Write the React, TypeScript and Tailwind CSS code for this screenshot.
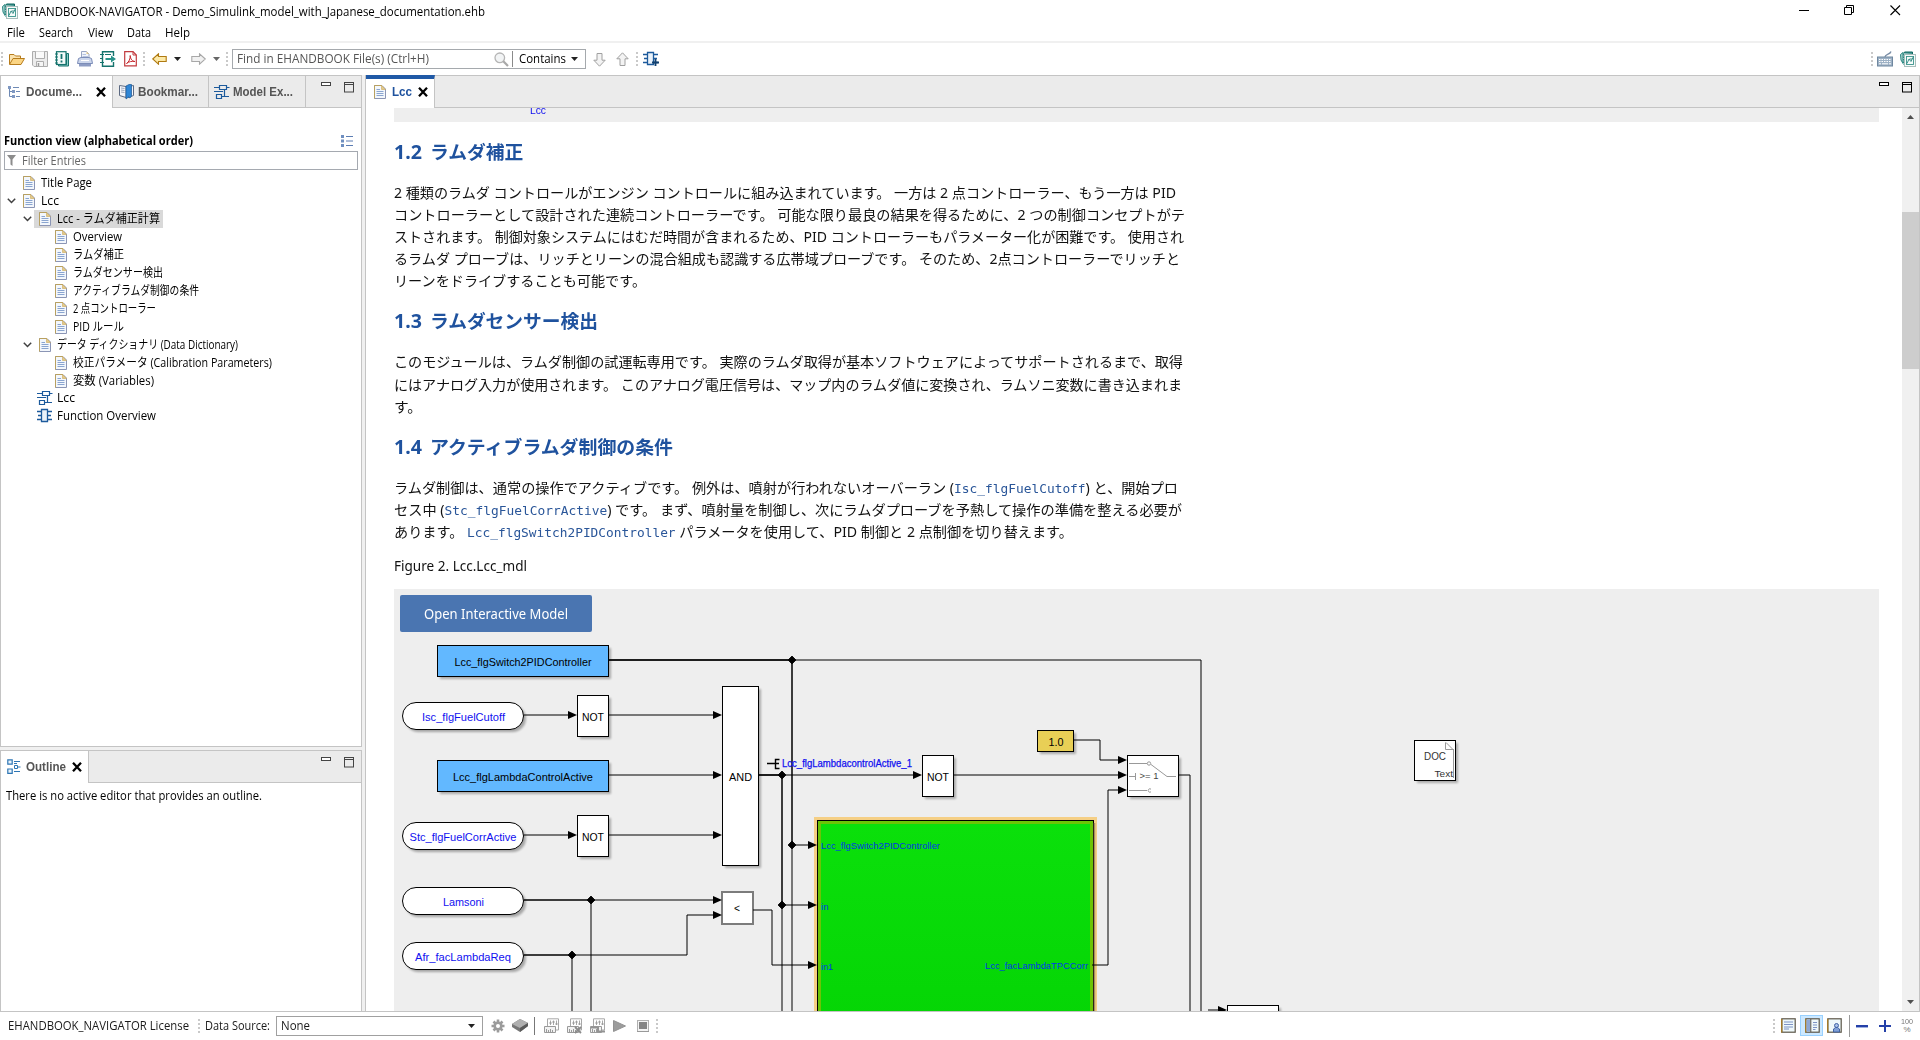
import React, { useLayoutEffect, useRef, useState } from "react";

const UI = "font-['Open_Sans','Noto_Sans_CJK_JP',sans-serif]";
const DOCF = "font-['Noto_Sans','Noto_Sans_CJK_JP',sans-serif]";

/* One line of text condensed or widened to an exact width. */
function Fit({ w, className = "", children }: { w: number; className?: string; children: React.ReactNode }) {
  const ref = useRef<HTMLSpanElement>(null);
  const [k, setK] = useState(1);
  useLayoutEffect(() => {
    if (ref.current && ref.current.offsetWidth) {
      const cs = parseFloat(getComputedStyle(ref.current).width);
      setK(w / (cs || ref.current.offsetWidth));
    }
  }, [w]);
  return (
    <span className={`block shrink-0 whitespace-pre ${className}`} style={{ width: w }}>
      <span ref={ref} className="inline-block origin-left" style={{ transform: `scaleX(${k})` }}>
        {children}
      </span>
    </span>
  );
}

type IP = { className?: string };
const Ico = ({ className = "", w = 16, h = 16, children }: IP & { w?: number; h?: number; children: React.ReactNode }) => (
  <svg className={`block shrink-0 ${className}`} width={w} height={h} viewBox={`0 0 ${w} ${h}`} fill="none">
    {children}
  </svg>
);

const Grip = ({ className = "" }: IP) => (
  <Ico w={3} h={16} className={className}>
    {[1, 5, 9, 13].map((y) => (
      <rect key={y} x="0" y={y} width="2" height="2" fill="#c9c9c9" />
    ))}
  </Ico>
);
const Tri = ({ className = "", c = "#222" }: IP & { c?: string }) => (
  <Ico w={7} h={4} className={className}>
    <path d="M0 0H7L3.5 4Z" fill={c} />
  </Ico>
);
const Logo = ({ className = "" }: IP) => (
  <Ico className={className}>
    <path d="M3.500 2.500L4.500 1H12.500V3" fill="#3d918b" stroke="#0d6660" />
    <path d="M.5 3.500L3 1.500V12.500L1 9Z" fill="#a9d2ce" stroke="#2b8780" />
    <path d="M3.500 3V13.500" stroke="#2b8780" strokeDasharray="1.500 1" />
    <rect x="4.500" y="3.500" width="11" height="12" fill="#f6fbfa" stroke="#a9bebc" />
    <rect x="6.500" y="5.500" width="7" height="8" stroke="#3a938c" strokeWidth=".9" />
    <path d="M7 12.500L9 8L11 10.500L13.500 5.500M9.500 8H12" stroke="#2b8780" strokeWidth=".9" />
  </Ico>
);
const DocIcon = ({ className = "" }: IP) => (
  <Ico w={12} h={14} className={className}>
    <path d="M.5 .5H8L11.500 4V13.500H.5Z" fill="#f3f7fc" stroke="#8b95b5" />
    <path d="M.5 13.500V.5H8" stroke="#b8a060" />
    <path d="M7.500 .5V4.500H11.500Z" fill="#e3c98a" stroke="#c9a75a" strokeWidth=".6" />
    <path d="M2.500 4.500H6M2.500 6.500H9.500M2.500 8.500H9.500M2.500 10.500H9.500" stroke="#8aa5d0" />
  </Ico>
);
const ModelIcon = ({ className = "" }: IP) => (
  <Ico className={className}>
    <path d="M5.500 1.500H12.500V5.500H5.500ZM2.500 10.500H7.500V14.500H2.500ZM0 3.500H5M13 3.500H15.500M0 7.500H8.500V8M10.500 5.500V12.500H15M8 12.500H10" stroke="#1c5a9c" strokeWidth="1.200" />
  </Ico>
);
const ChipIcon = ({ className = "", plus = false }: IP & { plus?: boolean }) => (
  <Ico className={className}>
    <path d="M4.500 1.500H10.500V13.500H4.500Z" fill="#eaf2fa" stroke="#1c5a9c" strokeWidth="1.300" />
    <path d="M0 3.500H4M1 7.500H4M0 11.500H4M11 3.500H15M11 7.500H14M11 11.500H15" stroke="#1c5a9c" strokeWidth="1.300" />
    {plus && <path d="M12.500 8V15M9 11.500H16" stroke="#12406f" strokeWidth="1.800" />}
  </Ico>
);
const XIcon = ({ className = "" }: IP) => (
  <Ico w={10} h={10} className={className}>
    <path d="M1 .8L9 9.200M9 .8L1 9.200" stroke="#000" strokeWidth="2.300" />
  </Ico>
);
const MinMax = ({ c = "#444", className = "" }: IP & { c?: string }) => (
  <Ico w={34} h={11} className={className}>
    <rect x=".5" y=".5" width="9" height="3" fill="#fff" stroke={c} />
    <rect x="23.500" y=".5" width="9" height="9.500" stroke={c} />
    <path d="M23 2.500H33" stroke={c} />
  </Ico>
);
const Chevron = ({ className = "" }: IP) => (
  <Ico w={9} h={6} className={className}>
    <path d="M.8 .8L4.500 4.500L8.200 .8" stroke="#404040" strokeWidth="1.500" />
  </Ico>
);

const OpenIcon = ({ className = "" }: IP) => (
  <Ico className={className}>
    <path d="M.5 13V3.500H5L6.500 5H11.500V7" fill="#fbe3ae" stroke="#b77c1c" />
    <path d="M.5 13.500L4 7.500H15.500L12 13.500Z" fill="#fbd584" stroke="#b77c1c" />
  </Ico>
);
const SaveIcon = ({ className = "" }: IP) => (
  <Ico className={className}>
    <path d="M.5 .5H15.500V15.500H2L.5 14Z" fill="#ececec" stroke="#adadad" />
    <path d="M3.500 .5V7.500H12.500V.5" fill="#fafafa" stroke="#adadad" />
    <path d="M4.500 15V10.500H11.500V15" fill="#f6f6f6" stroke="#adadad" />
    <path d="M6.500 12V15" stroke="#999" strokeWidth="1.500" />
  </Ico>
);
const BookIcon = ({ className = "" }: IP) => (
  <Ico className={className}>
    <path d="M12.500 2.500H14.500V15H4.500V13.500H12.500Z" fill="#8accc6" stroke="#15736d" />
    <rect x="2.500" y=".7" width="9.500" height="12.800" fill="#f4fbfa" stroke="#15736d" strokeWidth="1.200" />
    <path d="M1 3H4M1 6H4M1 9H4M1 12H4" stroke="#15736d" />
    <path d="M7.500 3V8M7.500 9.500V11.500" stroke="#15736d" strokeWidth="1.800" />
  </Ico>
);
const PrintIcon = ({ className = "" }: IP) => (
  <Ico className={className}>
    <path d="M4.500 8V.5H9.500L12 3V8" fill="#f2f5fb" stroke="#98a5c4" />
    <path d="M9.500 .5V3H12Z" fill="#e3c98a" />
    <path d="M5.500 3.500H9M5.500 5.500H11" stroke="#b5c2de" />
    <path d="M1.500 7.500L4 6.500H12L14.500 7.500L15.500 12.500H.5Z" fill="#cdd7ec" stroke="#7c8db8" />
    <path d="M2 13H14V15.500H2Z" fill="#8d9cc4" />
    <path d="M4 9.500H12" stroke="#fff" />
  </Ico>
);
const ExportIcon = ({ className = "" }: IP) => (
  <Ico className={className}>
    <path d="M13.500 5V.8H2.500V15.200H13.500V11" stroke="#15736d" strokeWidth="1.400" />
    <path d="M0 3.500H4M0 7.500H3M0 11.500H4M5 3.500H11" stroke="#15736d" />
    <path d="M5.500 7H11V4.500L16 8L11 11.500V9H5.500Z" fill="#2a938b" />
  </Ico>
);
const PdfIcon = ({ className = "" }: IP) => (
  <Ico w={13} h={16} className={className}>
    <path d="M.7 .7H9L12.300 4V14.800H.7Z" fill="#fff" stroke="#c23b3f" strokeWidth="1.200" />
    <path d="M9 .7V4H12.300" stroke="#c23b3f" />
    <path d="M2.500 12.500C5 11 6.500 7.500 6.200 4.500C6.500 8.500 8.500 10.300 11 10.500C8 10 5 10.500 2.500 12.500Z" stroke="#c8282d" />
  </Ico>
);
const LArrow = ({ className = "", s, f, flip }: IP & { s: string; f: string; flip?: boolean }) => (
  <Ico w={15} h={12} className={className}>
    <path d={flip ? "M14.300 6L8.500 .8V3.500H.8V8.500H8.500V11.200Z" : "M.7 6L6.500 .8V3.500H14.200V8.500H6.500V11.200Z"} fill={f} stroke={s} strokeWidth="1.100" />
  </Ico>
);
const VArrow = ({ className = "", up }: IP & { up?: boolean }) => (
  <Ico w={13} h={15} className={className}>
    <path d={up ? "M6.500 .8L12.200 6.800H9V13.500H4V6.800H.8Z" : "M6.500 14.200L12.200 8.200H9V1.500H4V8.200H.8Z"} fill="#f3f3f3" stroke="#a0a0a0" />
  </Ico>
);
const Magnifier = ({ className = "" }: IP) => (
  <Ico w={15} h={15} className={className}>
    <circle cx="5.800" cy="5.800" r="4.800" fill="#f2f4f5" stroke="#b5b5b5" strokeWidth="1.300" />
    <path d="M9.300 9.300L14 14" stroke="#a8a8a8" strokeWidth="2.200" />
  </Ico>
);
const KeyboardIcon = ({ className = "" }: IP) => (
  <Ico className={className}>
    <path d="M8 6C8 3 13 4 14 .5" stroke="#7a8ea6" strokeWidth="1.300" />
    <rect x=".5" y="6" width="15" height="9" fill="#9db1c5" stroke="#6f879f" />
    <path d="M2 8.500H14M2 10.500H14" stroke="#fff" strokeDasharray="1.500 1" />
    <path d="M2 12.800H4M5 12.800H11M12 12.800H14" stroke="#fff" />
  </Ico>
);
const TreeIcon = ({ className = "" }: IP) => (
  <Ico w={12} h={12} className={className}>
    <path d="M1.500 2V10.500H5M1.500 5.500H5" stroke="#6f8ab5" />
    <path d="M0 0H3V3H0ZM4 4H7V7H4ZM4 9H7V12H4Z" fill="#7f98c2" />
    <path d="M5 1.500H11M8 5.500H12M8 10.500H12" stroke="#6f8ab5" />
  </Ico>
);
const BookmarkIcon = ({ className = "" }: IP) => (
  <Ico className={className}>
    <path d="M.5 1.500L7 2.500V13.500L.5 11.500Z" fill="#f5f6fa" stroke="#5d6a82" />
    <path d="M2 4L5.500 4.500M2 6L5.500 6.500M2 8L5.500 8.500" stroke="#9aa7bd" />
    <path d="M14.500 1.500L9 2.500V13.500L14.500 11.500Z" fill="#f5f6fa" stroke="#5d6a82" />
    <path d="M7 2L10 .5H12.500V12L11 14L9.500 13L7 15Z" fill="#2f86d6" stroke="#1a5797" strokeWidth=".7" />
  </Ico>
);
const OutlineIcon = ({ className = "" }: IP) => (
  <Ico w={14} h={16} className={className}>
    <path d="M.8 .8H5.200V5.200H.8ZM.8 10H5.200V14.400H.8Z" fill="#eaf3fb" stroke="#2d76b5" strokeWidth="1.200" />
    <path d="M7.500 6.500H10.500V9.500H7.500Z" stroke="#2d76b5" />
    <path d="M7 2.500H13M11 8H13.500M7 12.500H13M7 4.500H10" stroke="#2d76b5" />
  </Ico>
);

function Title() {
  return (
    <div className="flex h-[24px] items-start">
      <Logo className="mt-[3px] ml-[2px]" />
      <Fit w={461} className="mt-[2px] ml-[6px] text-[12px] leading-[20px] text-black">EHANDBOOK-NAVIGATOR - Demo_Simulink_model_with_Japanese_documentation.ehb</Fit>
      <Ico w={10} h={11} className="mt-[5px] ml-auto"><path d="M0 5.500H10" stroke="#000" /></Ico>
      <Ico w={11} h={11} className="mt-[5px] ml-[35px]"><path d="M.5 2.500H7.500V9.500H.5ZM2.500 2V.5H9.500V7.500H8" stroke="#000" /></Ico>
      <Ico w={11} h={11} className="mt-[5px] mr-[19px] ml-[35px]"><path d="M.5 .5L10 10M10 .5L.5 10" stroke="#000" strokeWidth="1.100" /></Ico>
    </div>
  );
}

function Toolbar() {
  return (
    <div className="flex h-[32px] items-center">
      <Grip className="ml-px" />
      <OpenIcon className="ml-[5px]" />
      <SaveIcon className="ml-[7px]" />
      <BookIcon className="ml-[6px]" />
      <PrintIcon className="ml-[7px]" />
      <ExportIcon className="ml-[7px]" />
      <PdfIcon className="ml-[8px]" />
      <Grip className="ml-[6px]" />
      <LArrow className="ml-[6px]" s="#b07a12" f="#fdeaa8" />
      <Tri className="ml-[7px]" />
      <LArrow className="ml-[10px]" s="#a8a8a8" f="#f1f1f1" flip />
      <Tri className="ml-[7px]" c="#666" />
      <Grip className="ml-[6px]" />
      <div className="ml-[3px] flex h-[20px] w-[354px] shrink-0 items-center border border-[#a5a9ad] bg-white">
        <Fit w={192} className="ml-[4px] text-[12px] leading-[18px] text-[#555]">Find in EHANDBOOK File(s) (Ctrl+H)</Fit>
        <Magnifier className="ml-[65px]" />
        <div className="ml-[3px] h-[16px] w-px bg-[#8a8a8a]" />
        <Fit w={47} className="ml-[6px] text-[12px] leading-[18px] text-black">Contains</Fit>
        <Tri className="ml-[5px]" />
      </div>
      <VArrow className="ml-[7px]" />
      <VArrow className="ml-[10px]" up />
      <Grip className="ml-[7px]" />
      <ChipIcon plus className="ml-[4px]" />
      <Grip className="ml-auto" />
      <KeyboardIcon className="ml-[3px]" />
      <Logo className="mr-[4px] ml-[7px]" />
    </div>
  );
}

const tabText = "font-['Liberation_Sans',sans-serif] text-[12px] font-bold leading-[16px]";

function TreeRow({ level, open, icon, w, sel, cjk, children }: { level: number; open?: boolean; icon?: string; w: number; sel?: boolean; cjk?: boolean; children: string }) {
  const pad = ["ml-[4px]", "ml-[20px]", "ml-[36px]"][level];
  return (
    <div className="flex h-[18px] items-center">
      <div className={`flex w-[13px] shrink-0 items-center ${pad}`}>{open && <Chevron className="ml-[2px]" />}</div>
      <div className={`flex h-[18px] items-center pr-[3px] ${sel ? "bg-[#d9d9d9]" : ""}`}>
        {icon === "model" ? <ModelIcon className="ml-[3px]" /> : icon === "chip" ? <ChipIcon className="ml-[3px]" /> : <DocIcon className="mr-[-1px] ml-[5px]" />}
        <Fit w={w} className={`text-[12px] text-black ${cjk ? "leading-[20px]" : "leading-[18px]"} ${icon ? "ml-[4px]" : "ml-[7px]"}`}>{children}</Fit>
      </div>
    </div>
  );
}

function LeftPanels() {
  return (
    <div className="flex w-[362px] shrink-0 flex-col">
      <div className="flex h-[672px] flex-col border border-[#c4c4c4] bg-white">
        <div className="flex h-[32px] shrink-0 bg-[#ebebeb]">
          <div className="flex w-[112px] items-center border-r border-[#c4c4c4] bg-white">
            <TreeIcon className="ml-[7px]" />
            <Fit w={56} className={`${tabText} ml-[6px] text-[#555]`}>Docume...</Fit>
            <XIcon className="ml-[14px]" />
          </div>
          <div className="flex w-[96px] items-center border-r border-b border-[#c4c4c4]">
            <BookmarkIcon className="ml-[6px]" />
            <Fit w={60} className={`${tabText} ml-[3px] text-[#555]`}>Bookmar...</Fit>
          </div>
          <div className="flex w-[97px] items-center border-r border-b border-[#c4c4c4]">
            <ModelIcon className="ml-[5px]" />
            <Fit w={60} className={`${tabText} ml-[3px] text-[#555]`}>Model Ex...</Fit>
          </div>
          <div className="flex flex-1 justify-end border-b border-[#c4c4c4]">
            <MinMax className="mt-[6px] mr-[6px]" />
          </div>
        </div>
        <div className="mt-[23px] flex h-[20px] items-center justify-between">
          <Fit w={189} className="ml-[3px] text-[12px] leading-[18px] font-bold text-black">Function view (alphabetical order)</Fit>
          <Ico w={12} h={12} className="mr-[8px]">
            <path d="M0 0H3V3H0ZM0 4.500H3V7.500H0ZM0 9H3V12H0Z" fill="#6f8fc0" />
            <path d="M5 1.500H12M5 6H12M5 10.500H12" stroke="#5c7db3" />
          </Ico>
        </div>
        <div className="ml-[3px] flex h-[19px] w-[354px] items-center border border-[#a5a9b0]">
          <Ico w={9} h={11} className="ml-[2px]"><path d="M0 0H9L5.500 4.500V11L3.500 9.500V4.500Z" fill="#8c8c8c" /></Ico>
          <Fit w={64} className="ml-[6px] text-[12px] leading-[17px] text-[#666]">Filter Entries</Fit>
        </div>
        <div className="mt-[4px] flex flex-col">
          <TreeRow level={0} w={51}>Title Page</TreeRow>
          <TreeRow level={0} open w={18}>Lcc</TreeRow>
          <TreeRow level={1} open sel cjk w={103}>Lcc - ラムダ補正計算</TreeRow>
          <TreeRow level={2} w={49}>Overview</TreeRow>
          <TreeRow level={2} cjk w={51}>ラムダ補正</TreeRow>
          <TreeRow level={2} cjk w={90}>ラムダセンサー検出</TreeRow>
          <TreeRow level={2} cjk w={126}>アクティブラムダ制御の条件</TreeRow>
          <TreeRow level={2} cjk w={83}>2 点コントローラー</TreeRow>
          <TreeRow level={2} cjk w={51}>PID ルール</TreeRow>
          <TreeRow level={1} cjk open w={181}>データ ディクショナリ (Data Dictionary)</TreeRow>
          <TreeRow level={2} cjk w={199}>校正パラメータ (Calibration Parameters)</TreeRow>
          <TreeRow level={2} w={81}>変数 (Variables)</TreeRow>
          <div className="mt-[-1px]">
            <TreeRow level={1} icon="model" w={18}>Lcc</TreeRow>
            <TreeRow level={1} icon="chip" w={99}>Function Overview</TreeRow>
          </div>
        </div>
      </div>
      <div className="mt-[3px] flex flex-1 flex-col border border-b-0 border-[#c4c4c4] bg-white">
        <div className="flex h-[32px] shrink-0 bg-[#ebebeb]">
          <div className="flex w-[88px] items-center border-r border-[#c4c4c4] bg-white">
            <OutlineIcon className="ml-[6px]" />
            <Fit w={40} className={`${tabText} ml-[5px] text-[#555]`}>Outline</Fit>
            <XIcon className="ml-[6px]" />
          </div>
          <div className="flex flex-1 justify-end border-b border-[#c4c4c4]">
            <MinMax className="mt-[6px] mr-[6px]" />
          </div>
        </div>
        <Fit w={256} className="mt-[4px] ml-[5px] text-[12px] leading-[18px] text-black">There is no active editor that provides an outline.</Fit>
      </div>
    </div>
  );
}

const H = ({ n, w, children, className = "" }: { n: string; w: number; children: React.ReactNode; className?: string }) => (
  <h2 className={`flex text-[18.67px] leading-[28px] font-bold text-[#1f529e] ${className}`}>
    <Fit w={28}>{n}</Fit>
    <Fit w={w} className="ml-[8px] h-[28px]">{children}</Fit>
  </h2>
);
const L = ({ w, children }: { w: number; children: React.ReactNode }) => (
  <Fit w={w} className="h-[22.1px] text-[14px] leading-[22.1px] text-[#111]">{children}</Fit>
);
const M = ({ children }: { children: string }) => (
  <span className="font-['DejaVu_Sans_Mono',monospace] text-[12.7px] text-[#2a5699]">{children}</span>
);

function Arrow({ x, y }: { x: number; y: number }) {
  return <path d={`M${x} ${y}L${x - 9} ${y - 4}V${y + 4}Z`} fill="#000" />;
}
function Dot({ x, y }: { x: number; y: number }) {
  return <path d={`M${x} ${y - 4}L${x + 4} ${y}L${x} ${y + 4}L${x - 4} ${y}Z`} fill="#000" stroke="#000" strokeLinejoin="round" strokeWidth=".8" />;
}
function Box({ x, y, w, h, fill = "#fff" }: { x: number; y: number; w: number; h: number; fill?: string }) {
  return (
    <>
      <rect x={x + 2.5} y={y + 2.5} width={w} height={h} fill="#000" opacity=".28" filter="url(#soft)" />
      <rect x={x} y={y} width={w} height={h} fill={fill} stroke="#000" />
    </>
  );
}
function Pill({ y }: { y: number }) {
  return (
    <>
      <rect x={405} y={y + 2.5} width={121} height={27} rx={13.5} fill="#000" opacity=".3" filter="url(#soft)" />
      <rect x={402.5} y={y} width={121} height={27} rx={13.5} fill="#fff" stroke="#000" />
    </>
  );
}
function T({ x, y, w, s = 11, c = "#000", children, o = 1 }: { x: number; y: number; w: number; s?: number; c?: string; o?: number; children: string }) {
  return (
    <text x={x} y={y} fontSize={s} fill={c} opacity={o} textLength={w} lengthAdjust="spacingAndGlyphs" className="font-['Liberation_Sans',sans-serif]">
      {children}
    </text>
  );
}

const wires = [
  "M608 660H1201V1011",
  "M608 660H792V1011",
  "M608 660H792V845H815",
  "M524 715H575", "M608 715H720", "M608 775H720", "M524 835H575", "M608 835H720",
  "M758 775H920", "M758 775H782V905H815", "M758 775H782V1011",
  "M524 900H720", "M524 900H591V1011",
  "M524 955H687V915H720", "M524 955H572V1011",
  "M753 910H772V965H815",
  "M954 775H1125", "M1073 740H1100V760H1125", "M1092 965H1108V790H1125",
  "M1178 775H1190V1011", "M1208 1010H1222",
];

/* Block diagram; its view box uses window coordinates. */
function Diagram() {
  const blue = "#1010f0";
  return (
    <svg className="absolute inset-0" width="1485" height="422" viewBox="394 589 1485 422" fill="none">
      <defs>
        <filter id="soft" x="-20%" y="-20%" width="150%" height="150%"><feGaussianBlur stdDeviation="1" /></filter>
        <linearGradient id="green" x1="0" y1="0" x2="0" y2="1">
          <stop offset="0" stopColor="#0be00b" /><stop offset="1" stopColor="#05d505" />
        </linearGradient>
      </defs>
      <Box x={437.5} y={645.5} w={171} h={31} fill="#62b8ff" />
      <Box x={437.5} y={760.5} w={171} h={31} fill="#62b8ff" />
      <Pill y={702.5} /><Pill y={822.5} /><Pill y={887.5} /><Pill y={942.5} />
      <Box x={577.5} y={695.5} w={31} h={41} />
      <Box x={577.5} y={815.5} w={31} h={41} />
      <Box x={722.5} y={686.5} w={36} h={179} />
      <rect x={722} y={892} width={31} height={32} fill="#fff" stroke="#7c7c7c" strokeWidth="2" />
      <Box x={922.5} y={755.5} w={31} h={41} />
      <Box x={1037.5} y={730.5} w={36} h={21} fill="#e8cf56" />
      <Box x={1127.5} y={755.5} w={51} h={41} />
      <Box x={1227.5} y={1005.5} w={51} h={41} />
      <Box x={1414.5} y={740.5} w={41} h={40} />
      <rect x={814} y={817} width={283} height={200} fill="#f5cf85" />
      <rect x={817.5} y={820.5} width={276} height={200} fill="#6cc406" stroke="#000" />
      <rect x={821} y={824} width={269} height={200} fill="url(#green)" />
      <path d="M1094.500 823V1011" stroke="#a98f5c" strokeWidth="1.500" />

      {wires.map((d) => <path key={d} d={d} stroke="#000" />)}
      {[[577, 715], [722, 715], [722, 775], [577, 835], [722, 835], [722, 900], [722, 915], [922, 775], [817, 845], [817, 905], [817, 965], [1127, 760], [1127, 775], [1127, 790], [1227, 1010]].map(([x, y]) => <Arrow key={`${x}-${y}`} x={x} y={y} />)}
      {[[792, 660], [782, 775], [792, 845], [782, 905], [591, 900], [572, 955]].map(([x, y]) => <Dot key={`${x}-${y}`} x={x} y={y} />)}

      <T x={454.500} y={666} w={137}>Lcc_flgSwitch2PIDController</T>
      <T x={422} y={721} w={83} c={blue}>Isc_flgFuelCutoff</T>
      <T x={453} y={781} w={140}>Lcc_flgLambdaControlActive</T>
      <T x={409.500} y={841} w={107} c={blue}>Stc_flgFuelCorrActive</T>
      <T x={443} y={906} w={41} c={blue}>Lamsoni</T>
      <T x={415} y={961} w={96} c={blue}>Afr_facLambdaReq</T>
      <T x={582} y={721} w={22}>NOT</T>
      <T x={582} y={841} w={22}>NOT</T>
      <T x={729} y={781} w={23}>AND</T>
      <T x={927} y={781} w={22}>NOT</T>
      <T x={734} y={912} w={6} s={10}>&lt;</T>
      <T x={1048.500} y={746} w={15}>1.0</T>
      <path d="M767 763.500H775M779.500 759.500H775.500V768.500H779.500M775 763.500H779" stroke="#000" strokeWidth="1.400" />
      <g stroke="#1010f0" strokeWidth=".25">
        <T x={782} y={767} w={130} s={10} c="#1010f0">Lcc_flgLambdacontrolActive_1</T>
      </g>
      <T x={821} y={849} w={119} s={9.500} c="#0038e8">Lcc_flgSwitch2PIDController</T>
      <T x={821} y={910} w={7.500} s={9.500} c="#0038e8">in</T>
      <T x={821} y={970} w={12} s={9.500} c="#0038e8">in1</T>
      <T x={985} y={969} w={103} s={9.500} c="#0038e8">Lcc_facLambdaTPCCorr</T>

      <g stroke="#999">
        <path d="M1129 763.500H1147M1151 764.500L1167 776.500H1176M1129 776.500H1135M1135.500 773V780M1129 790.500H1147" />
        <circle cx="1149" cy="763.500" r="1.700" />
        <path d="M1151 789.200A1.700 1.700 0 1 0 1151 791.800" />
      </g>
      <T x={1139.500} y={779} w={19} s={9} c="#444">&gt;= 1</T>
      <path d="M1445.500 742.500V749.500H1453L1446 742.500M1453.500 749V778" stroke="#999" />
      <T x={1424} y={760} w={22} s={10} c="#333">DOC</T>
      <T x={1434.500} y={776.500} w={18.500} s={9.500} c="#333">Text</T>
    </svg>
  );
}

function Editor() {
  return (
    <div className="ml-[3px] flex min-w-0 flex-1 flex-col border border-b-0 border-[#c4c4c4] bg-white">
      <div className="flex h-[32px] shrink-0 bg-[#ebebeb]">
        <div className="mt-[-1px] flex w-[69px] items-center border-t-4 border-r border-t-[#1f59a6] border-r-[#c4c4c4] bg-white pb-[3px]">
          <DocIcon className="ml-[8px]" />
          <Fit w={20} className={`${tabText} ml-[6px] text-[#1f529e]`}>Lcc</Fit>
          <XIcon className="ml-[6px]" />
        </div>
        <div className="flex flex-1 justify-end border-b border-[#c4c4c4]">
          <MinMax c="#000" className="mt-[6px] mr-[6px]" />
        </div>
      </div>
      <div className="flex min-h-0 flex-1">
        <div className={`flex flex-1 flex-col overflow-hidden pl-[28px] ${DOCF}`}>
          <div className="h-[14px] w-[1485px] shrink-0 overflow-hidden bg-[#eee]">
            <div className="mt-[-4px]"><Fit w={16} className="ml-[136px] font-['Liberation_Sans',sans-serif] text-[11px] leading-[13px] text-[#1010f0]">Lcc</Fit></div>
          </div>
          <H n="1.2" w={93.3} className="mt-[16px]">ラムダ補正</H>
          <div className="mt-[16px]">
            <L w={782}>2 種類のラムダ コントロールがエンジン コントロールに組み込まれています。 一方は 2 点コントローラー、もう一方は PID</L>
            <L w={791}>コントローラーとして設計された連続コントローラーです。 可能な限り最良の結果を得るために、2 つの制御コンセプトがテ</L>
            <L w={790}>ストされます。 制御対象システムにはむだ時間が含まれるため、PID コントローラーもパラメーター化が困難です。 使用され</L>
            <L w={786}>るラムダ プローブは、リッチとリーンの混合組成も認識する広帯域プローブです。 そのため、2点コントローラーでリッチと</L>
            <L w={252}>リーンをドライブすることも可能です。</L>
          </div>
          <H n="1.3" w={168} className="mt-[15px]">ラムダセンサー検出</H>
          <div className="mt-[16px]">
            <L w={789}>このモジュールは、ラムダ制御の試運転専用です。 実際のラムダ取得が基本ソフトウェアによってサポートされるまで、取得</L>
            <L w={788}>にはアナログ入力が使用されます。 このアナログ電圧信号は、マップ内のラムダ値に変換され、ラムソニ変数に書き込まれま</L>
            <L w={28}>す。</L>
          </div>
          <H n="1.4" w={243} className="mt-[15px]">アクティブラムダ制御の条件</H>
          <div className="mt-[16px]">
            <L w={784}>ラムダ制御は、通常の操作でアクティブです。 例外は、噴射が行われないオーバーラン (<M>Isc_flgFuelCutoff</M>) と、開始プロ</L>
            <L w={788}>セス中 (<M>Stc_flgFuelCorrActive</M>) です。 まず、噴射量を制御し、次にラムダプローブを予熱して操作の準備を整える必要が</L>
            <L w={679}>あります。 <M>Lcc_flgSwitch2PIDController</M> パラメータを使用して、PID 制御と 2 点制御を切り替えます。</L>
          </div>
          <div className="mt-[12px] h-[33.9px] shrink-0"><L w={133}>Figure 2. Lcc.Lcc_mdl</L></div>
          <div className="relative min-h-0 w-[1485px] flex-1 overflow-hidden bg-[#eee]">
            <Diagram />
            <div className="relative mt-[6px] ml-[6px] flex h-[37px] w-[192px] items-center justify-center rounded-[2px] bg-[#4a75b1]">
              <Fit w={144} className="text-[14.5px] leading-[24px] text-white">Open Interactive Model</Fit>
            </div>
          </div>
        </div>
        <div className="flex w-[17px] shrink-0 flex-col items-center bg-[#f0f0f0]">
          <Ico w={7} h={4} className="mt-[7px]"><path d="M0 4H7L3.500 0Z" fill="#505050" /></Ico>
          <div className="mt-[93px] h-[157px] w-full bg-[#cdcdcd]" />
          <Tri c="#505050" className="mt-auto mb-[7px]" />
        </div>
      </div>
    </div>
  );
}

const Sim = ({ className = "", kind }: IP & { kind: number }) => (
  <Ico className={className}>
    <path d="M3.500 8V.8H14.500V12H12" stroke="#a8a8a8" />
    <path d="M6.500 2.500V7M9.500 2.500V7M12.500 2.500V7" stroke="#a8a8a8" />
    <path d="M5.500 5H7.500M8.500 4H10.500M11.500 6H13.500" stroke="#999" strokeWidth="1.500" />
    <path d="M.5 8.500H11.500V14.500H.5Z" fill="#f2f2f2" stroke="#9a9a9a" />
    <path d="M2.500 14V11M4.500 14V12M6.500 14V11M8.500 14V12" stroke="#9a9a9a" />
    {kind === 1 && <path d="M8 9L14 15M14 9L8 15" stroke="#8a8a8a" strokeWidth="1.800" />}
    {kind === 2 && <path d="M1 9.500H8V13.500H15" stroke="#939393" strokeWidth="2" />}
  </Ico>
);
const Page = ({ className = "", kind }: IP & { kind: number }) => (
  <Ico w={15} h={15} className={className}>
    <rect x=".8" y=".8" width="13.400" height="13.400" fill="#eef8fb" stroke="#5b5548" strokeWidth="1.200" />
    <path d="M.7 1V14.500" stroke="#a37b2b" strokeWidth="1.400" />
    {kind === 0 && <path d="M3 4H12M3 6.500H12M3 9H12M3 11H8" stroke="#7d93c4" />}
    {kind === 1 && <><rect x="1.500" y="1.500" width="4" height="12" fill="#8ea6d2" /><path d="M5.800 1V14" stroke="#5b5548" /><path d="M8 4.500H12M8 7H12M8 9.500H12M8 11.500H10.500" stroke="#7d93c4" /></>}
    {kind === 2 && <><circle cx="9.500" cy="7.500" r="2" fill="#a9c1e8" stroke="#3f62a5" /><path d="M6.500 14V11L8.500 9.500H10.500L12.500 11V14Z" fill="#7f9fd6" stroke="#3f62a5" /></>}
  </Ico>
);

function StatusBar() {
  return (
    <div className="flex h-[29px] shrink-0 items-center border-t border-[#c4c4c4] bg-white pb-px text-[12px] leading-[18px] text-[#1a1a1a]">
      <Fit w={181} className="ml-[8px]">EHANDBOOK_NAVIGATOR License</Fit>
      <Grip className="ml-[9px]" />
      <Fit w={65} className="ml-[4px]">Data Source:</Fit>
      <div className="ml-[6px] flex h-[20px] w-[207px] shrink-0 items-center border border-[#a0a0a0]">
        <Fit w={29} className="ml-[4px] leading-[18px]">None</Fit>
        <Tri className="mr-[7px] ml-auto" />
      </div>
      <Ico w={14} h={14} className="ml-[8px]">
        <path d="M7 .5V13.500M.5 7H13.500M2.500 2.500L11.500 11.500M11.500 2.500L2.500 11.500" stroke="#9b9b9b" strokeWidth="2.600" />
        <circle cx="7" cy="7" r="4.600" fill="#9b9b9b" /><circle cx="7" cy="7" r="2" fill="#fff" />
      </Ico>
      <Ico w={16} h={13} className="ml-[7px]">
        <path d="M0 5L8 0L16 4V7L8 13L0 8Z" fill="#777" />
        <path d="M0 5L8 0L16 4L8 9Z" fill="#b0b0b0" />
        <path d="M8 9L16 4V7L8 13Z" fill="#5a5a5a" />
      </Ico>
      <div className="ml-[6px] h-[18px] w-px bg-[#777]" />
      <Sim kind={0} className="ml-[9px]" />
      <Sim kind={1} className="ml-[7px]" />
      <Sim kind={2} className="ml-[7px]" />
      <Ico w={13} h={12} className="ml-[7px]"><path d="M.5 .5L12.500 6L.5 11.500Z" fill="#9c9c9c" stroke="#929292" /></Ico>
      <Ico w={12} h={12} className="ml-[11px]"><rect x=".5" y=".5" width="11" height="11" fill="#f4f4f4" stroke="#b0b0b0" /><rect x="2" y="2" width="8" height="7" fill="#858585" /><path d="M0 11.500H12" stroke="#999" /></Ico>
      <Grip className="ml-[7px]" />
      <Grip className="ml-auto" />
      <Page kind={0} className="ml-[5px]" />
      <div className="ml-[4px] flex h-[21px] w-[23px] shrink-0 items-center border border-[#99d1ff] bg-[#cce8ff]">
        <Page kind={1} className="ml-[4px]" />
      </div>
      <Page kind={2} className="ml-[4px]" />
      <div className="ml-[7px] h-[22px] w-px bg-[#999]" />
      <Ico w={12} h={12} className="ml-[6px]"><path d="M0 6H12" stroke="#2540a8" strokeWidth="2" /><path d="M0 7.500H12" stroke="#9fb0e0" /></Ico>
      <Ico w={12} h={12} className="ml-[11px]"><path d="M0 6H12M6 0V12" stroke="#2540a8" strokeWidth="2" /></Ico>
      <div className="mr-[7px] ml-[10px] flex w-[12px] flex-col items-center font-['Liberation_Sans',sans-serif] text-[8px] leading-[8px] text-[#777]">
        <Fit w={12}>100</Fit>
        <span>%</span>
      </div>
    </div>
  );
}

export default function App() {
  return (
    <div className={`flex h-[1040px] w-[1920px] flex-col overflow-hidden bg-white ${UI}`}>
      <Title />
      <div className="flex h-[17px] shrink-0 items-center pl-[7px] text-[12px] leading-[17px] text-black">
        <Fit w={18}>File</Fit>
        <Fit w={34} className="ml-[14px]">Search</Fit>
        <Fit w={25} className="ml-[15px]">View</Fit>
        <Fit w={24} className="ml-[14px]">Data</Fit>
        <Fit w={25} className="ml-[14px]">Help</Fit>
      </div>
      <div className="h-[2px] shrink-0 bg-[#f0f0f0]" />
      <Toolbar />
      <div className="flex min-h-0 flex-1 bg-[#f0f0f0]">
        <LeftPanels />
        <Editor />
      </div>
      <StatusBar />
    </div>
  );
}
